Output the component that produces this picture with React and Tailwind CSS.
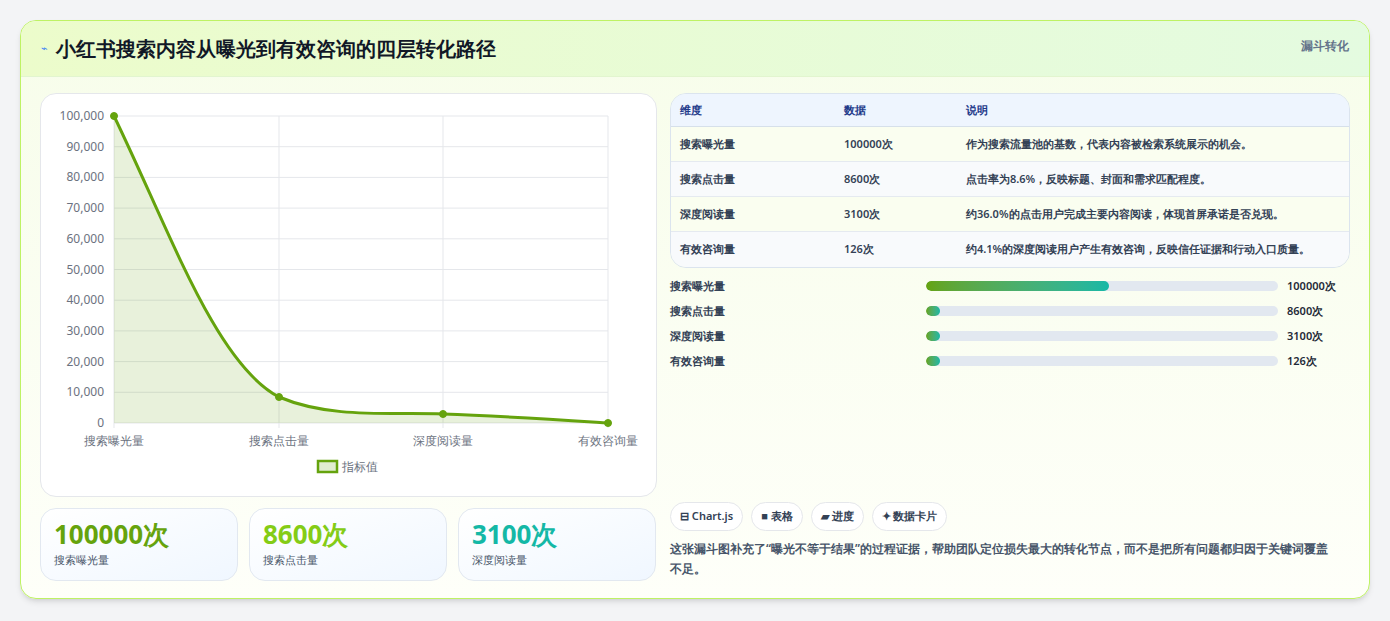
import React from 'react';

const rows = [
  ['搜索曝光量', '100000次', '作为搜索流量池的基数，代表内容被检索系统展示的机会。'],
  ['搜索点击量', '8600次', '点击率为8.6%，反映标题、封面和需求匹配程度。'],
  ['深度阅读量', '3100次', '约36.0%的点击用户完成主要内容阅读，体现首屏承诺是否兑现。'],
  ['有效咨询量', '126次', '约4.1%的深度阅读用户产生有效咨询，反映信任证据和行动入口质量。'],
];

const bars = [
  ['搜索曝光量', '100000次', 52],
  ['搜索点击量', '8600次', 4],
  ['深度阅读量', '3100次', 4],
  ['有效咨询量', '126次', 4],
];

function Chart() {
  const x0 = 73, x1 = 567, y0 = 22, y1 = 329;
  const ticks = [100000, 90000, 80000, 70000, 60000, 50000, 40000, 30000, 20000, 10000, 0];
  const xs = [73, 238, 402, 567];
  const labels = ['搜索曝光量', '搜索点击量', '深度阅读量', '有效咨询量'];
  const curve = 'M73 22 C130 140 175 270 238 303 C290 325 350 318 402 320 C460 322 520 326 567 329';
  return (
    <svg width="615" height="403" viewBox="0 0 615 403" className="block">
      {ticks.map((t, i) => {
        const y = y0 + (i * (y1 - y0)) / 10;
        return (
          <g key={t}>
            <line x1={x0} x2={x1} y1={y} y2={y} stroke="#e5e7eb" />
            <text x={x0 - 10} y={y + 4} textAnchor="end" fontSize="12" fill="#6b7280">{t.toLocaleString('en-US')}</text>
          </g>
        );
      })}
      {xs.map((x, i) => (
        <g key={x}>
          <line x1={x} x2={x} y1={y0} y2={y1 + 5} stroke="#e5e7eb" />
          <text x={x} y={351} textAnchor="middle" fontSize="12" fill="#6b7280">{labels[i]}</text>
        </g>
      ))}
      <path d={curve + ' L567 329 L73 329 Z'} fill="rgba(101,163,13,0.15)" />
      <path d={curve} fill="none" stroke="#65a30d" strokeWidth="3" />
      {[[73, 22], [238, 303], [402, 320], [567, 329]].map(([x, y]) => (
        <circle key={x} cx={x} cy={y} r="3.5" fill="#65a30d" stroke="#65a30d" />
      ))}
      <rect x="277" y="367" width="19" height="11" fill="rgba(101,163,13,0.2)" stroke="#65a30d" strokeWidth="2.5" />
      <text x="301" y="377" fontSize="12" fill="#6b7280">指标值</text>
    </svg>
  );
}

export default function App() {
  return (
    <div className="min-h-[621px] bg-[#f3f4f6] pt-5 px-5 font-['Noto_Sans_CJK_SC','Noto_Sans',sans-serif]">
      <div className="h-[579px] rounded-2xl border border-[#bef264] bg-gradient-to-b from-[#f7fdea] to-[#fefff9] shadow-md overflow-hidden">
        <div className="h-[56px] flex items-center justify-between px-5 bg-gradient-to-r from-[#ecfccb] to-[#e4fbe0] border-b border-[#e2f5cf]">
          <div className="flex items-center gap-2">
            <span className="text-[11px] text-[#3b82f6]">⌁</span>
            <h1 className="text-[20px] font-bold text-[#111827]">小红书搜索内容从曝光到有效咨询的四层转化路径</h1>
          </div>
          <span className="self-start mt-4 text-[12px] font-semibold text-[#64748b]">漏斗转化</span>
        </div>
        <div className="flex gap-[13px] px-[19px] pt-4">
          <div className="w-[617px] flex flex-col gap-[11px]">
            <div className="h-[404px] rounded-2xl border border-[#e5e7eb] bg-white overflow-hidden">
              <Chart />
            </div>
            <div className="flex gap-[11px]">
              {[['100000次', '搜索曝光量', 'text-[#65a30d]'], ['8600次', '搜索点击量', 'text-[#84cc16]'], ['3100次', '深度阅读量', 'text-[#14b8a6]']].map(([v, l, c]) => (
                <div key={l} className="w-[198px] h-[73px] rounded-2xl border border-[#e2e8f0] bg-gradient-to-br from-white to-[#f0f7ff] px-[13px] pt-[9px]">
                  <div className={`text-[26px] font-bold leading-[32px] ${c}`}>{v}</div>
                  <div className="text-[11px] text-[#475569] mt-[2px]">{l}</div>
                </div>
              ))}
            </div>
          </div>
          <div className="flex-1 flex flex-col">
            <div className="rounded-2xl border border-[#dbe4ee] overflow-hidden text-[11px]">
              <div className="flex h-[33px] items-center bg-[#eef5fe] border-b border-[#d6e0ea] font-semibold text-[#1e3a8a]">
                <div className="w-[173px] pl-[9px]">维度</div>
                <div className="w-[122px]">数据</div>
                <div className="flex-1">说明</div>
              </div>
              {rows.map((r, i) => (
                <div key={r[0]} className={`flex h-[35px] items-center font-semibold text-[#334155] ${i < 3 ? 'border-b border-[#e5eaf0]' : ''} ${i % 2 ? 'bg-[#f8fafc]' : 'bg-[#fafef0]'}`}>
                  <div className="w-[173px] pl-[9px]">{r[0]}</div>
                  <div className="w-[122px]">{r[1]}</div>
                  <div className="flex-1">{r[2]}</div>
                </div>
              ))}
            </div>
            <div className="flex flex-col gap-[9px] mt-[10px]">
              {bars.map(([l, v, p]) => (
                <div key={l} className="flex items-center h-[16px] text-[11px] font-semibold">
                  <div className="w-[256px] text-[#334155]">{l}</div>
                  <div className="w-[352px] h-[10px] rounded-full bg-[#e2e8f0] overflow-hidden">
                    <div className="h-full rounded-full bg-gradient-to-r from-[#65a30d] to-[#14b8a6]" style={{ width: `${p}%` }} />
                  </div>
                  <div className="ml-[9px] text-[#1f2937]">{v}</div>
                </div>
              ))}
            </div>
            <div className="flex gap-2 mt-[133px]">
              {['⊟ Chart.js', '■ 表格', '▰ 进度', '✦ 数据卡片'].map((t) => (
                <span key={t} className="h-[29px] px-[9px] flex items-center rounded-full border border-[#e5e7eb] bg-white text-[11px] font-semibold text-[#334155]">{t}</span>
              ))}
            </div>
            <p className="mt-[8px] pr-[16px] text-[12px] leading-[20px] font-semibold text-[#475569]">
              这张漏斗图补充了“曝光不等于结果”的过程证据，帮助团队定位损失最大的转化节点，而不是把所有问题都归因于关键词覆盖不足。
            </p>
          </div>
        </div>
      </div>
    </div>
  );
}
